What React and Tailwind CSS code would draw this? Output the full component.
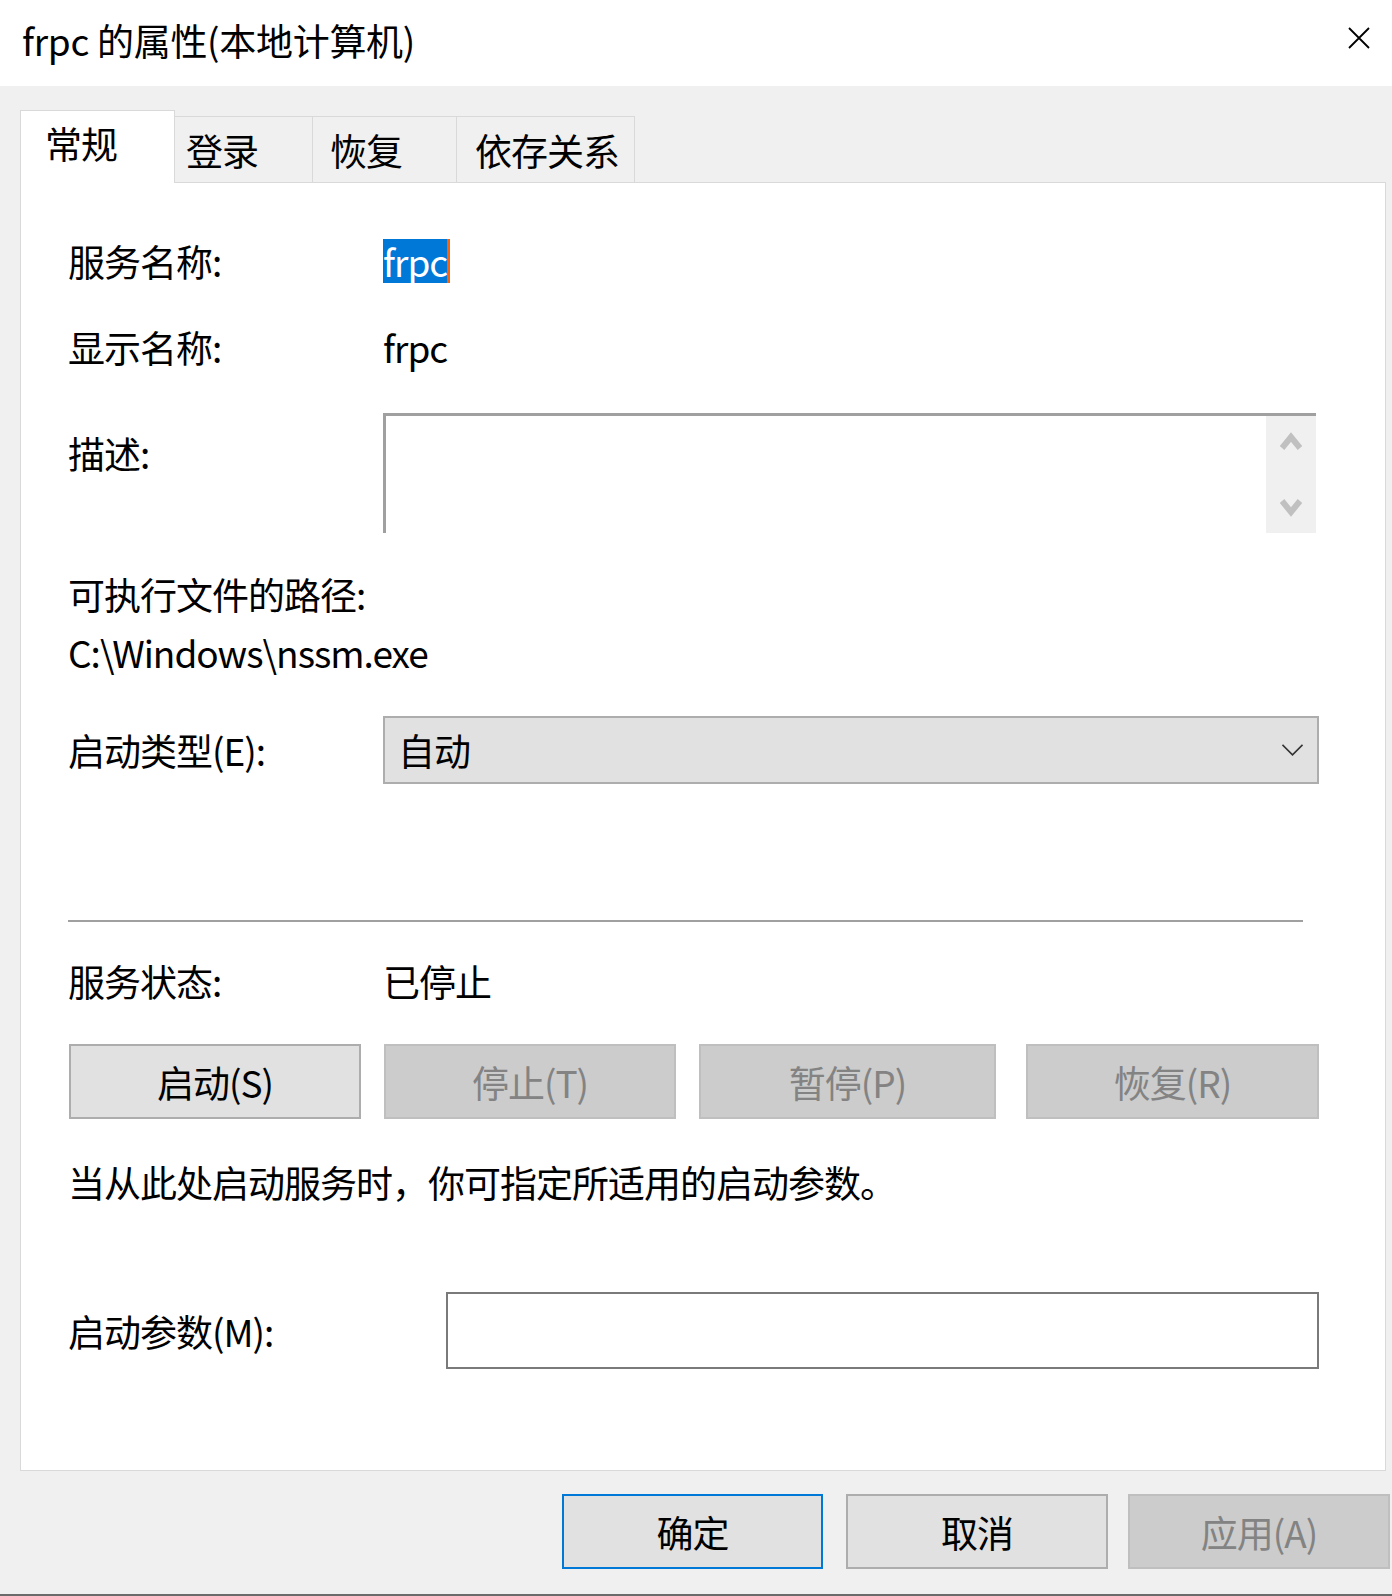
import React from 'react';

const tabs = [
    { label: '常规', active: true, box: 'w-[155px] h-[73px] pl-[24px] pt-[10px]' },
    { label: '登录', box: 'w-[138px] h-[67px] pl-[11px] pt-[11px]' },
    { label: '恢复', box: 'w-[144px] h-[67px] pl-[17px] pt-[11px]' },
    { label: '依存关系', box: 'w-[178px] h-[67px] pl-[18px] pt-[11px]' },
];

const Button = ({ children, variant = 'normal', className = '' }) => {
    const look = {
        normal: 'border-[#adadad] bg-[#e1e1e1] text-black',
        focused: 'border-[#0078d7] bg-[#e1e1e1] text-black',
        disabled: 'border-[#bfbfbf] bg-[#cccccc] text-[#838383]',
    }[variant];
    return (
        <div className={`h-[75px] shrink-0 border-2 flex items-center justify-center leading-[44px] ${look} ${className}`}>
            {children}
        </div>
    );
};

const Row = ({ label, labelWidth = 'w-[315px]', className = '', children }) => (
    <div className={`flex items-center shrink-0 ${className}`}>
        <div className={`${labelWidth} shrink-0 leading-[44px]`}>{label}</div>
        {children}
    </div>
);

const Chevron = ({ up }) => (
    <svg width="22" height="20" viewBox="0 0 22 20">
        <polyline
            points={up ? '2,17 11,6 20,17' : '2,3 11,14 20,3'}
            fill="none"
            stroke="#c0c0c0"
            strokeWidth="6"
            strokeLinejoin="miter"
        />
    </svg>
);

export default function App() {
    return (
        <div className="w-[1392px] h-[1596px] bg-[#f0f0f0] flex flex-col overflow-hidden text-[37px] tracking-[-1px] text-black font-['Noto_Sans_CJK_SC',sans-serif]">
            {/* title bar */}
            <div className="h-[86px] shrink-0 bg-white flex items-center pl-[22px]">
                <span className="flex-1 leading-[44px] -mt-[7px] tracking-[-0.3px]">frpc 的属性(本地计算机)</span>
                <svg className="mr-[22px] -mt-[10px]" width="22" height="22" viewBox="0 0 22 22">
                    <path d="M1 1 L21 21 M21 1 L1 21" stroke="#000" strokeWidth="1.8" fill="none" />
                </svg>
            </div>

            {/* tab strip */}
            <div className="h-[97px] shrink-0 -mb-px relative z-10 flex items-end pl-[20px]">
                {tabs.map((t) => (
                    <div
                        key={t.label}
                        className={`${t.box} shrink-0 leading-[44px] ${
                            t.active
                                ? 'bg-white border-l border-t border-r border-[#d9d9d9]'
                                : 'bg-[#f0f0f0] border-t border-r border-b border-[#d9d9d9]'
                        }`}
                    >
                        {t.label}
                    </div>
                ))}
            </div>

            {/* general page */}
            <div className="ml-[20px] w-[1366px] h-[1289px] shrink-0 bg-white border border-[#d9d9d9] pl-[47px] flex flex-col">
                <Row label="服务名称:" className="h-[44px] mt-[56px]">
                    <span className="h-[44px] leading-[44px] bg-[#0078d7] text-white border-r-[3px] border-[#f7630c]">frpc</span>
                </Row>

                <Row label="显示名称:" className="h-[44px] mt-[42px]">
                    <span className="leading-[44px]">frpc</span>
                </Row>

                <div className="flex mt-[44px] shrink-0">
                    <div className="w-[315px] shrink-0 pt-[18px] leading-[44px]">描述:</div>
                    <div className="w-[933px] h-[120px] border-t-[3px] border-l-[3px] border-[#a0a0a0] flex justify-end">
                        <div className="w-[50px] h-full bg-[#f0f0f0] flex flex-col items-center justify-between py-[15px]">
                            <Chevron up />
                            <Chevron />
                        </div>
                    </div>
                </div>

                <div className="h-[44px] mt-[39px] leading-[44px] shrink-0">可执行文件的路径:</div>
                <div className="h-[44px] mt-[14px] leading-[44px] shrink-0">C:\Windows\nssm.exe</div>

                <Row label="启动类型(E):" className="mt-[42px]">
                    <div className="w-[936px] h-[68px] border-2 border-[#adadad] bg-[#e1e1e1] flex items-center justify-between pl-[13px] pr-[14px]">
                        <span className="leading-[44px]">自动</span>
                        <svg width="21" height="12" viewBox="0 0 21 12">
                            <polyline points="0.5,0.8 10.5,10.8 20.5,0.8" fill="none" stroke="#333" strokeWidth="1.6" />
                        </svg>
                    </div>
                </Row>

                <div className="w-[1235px] h-[2px] mt-[136px] bg-[#a0a0a0] shrink-0" />

                <Row label="服务状态:" className="h-[44px] mt-[37px]">
                    <span className="leading-[44px]">已停止</span>
                </Row>

                <div className="flex mt-[41px] shrink-0">
                    <Button className="ml-[1px] w-[292px]">启动(S)</Button>
                    <Button variant="disabled" className="ml-[23px] w-[292px]">停止(T)</Button>
                    <Button variant="disabled" className="ml-[23px] w-[297px]">暂停(P)</Button>
                    <Button variant="disabled" className="ml-[30px] w-[293px]">恢复(R)</Button>
                </div>

                <div className="h-[44px] mt-[41px] leading-[44px] shrink-0">当从此处启动服务时，你可指定所适用的启动参数。</div>

                <Row label="启动参数(M):" labelWidth="w-[378px]" className="mt-[88px]">
                    <div className="w-[873px] h-[77px] border-2 border-[#7a7a7a] bg-white" />
                </Row>
            </div>

            {/* dialog buttons */}
            <div className="flex mt-[23px] pl-[562px] shrink-0">
                <Button variant="focused" className="w-[261px]">确定</Button>
                <Button className="ml-[23px] w-[262px]">取消</Button>
                <Button variant="disabled" className="ml-[20px] w-[262px]">应用(A)</Button>
            </div>

            <div className="mt-auto h-[2px] shrink-0 bg-[#6b6b6b]" />
        </div>
    );
}
